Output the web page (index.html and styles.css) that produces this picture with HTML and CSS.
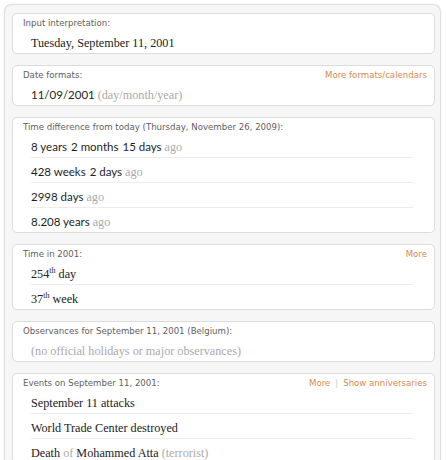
FILE: index.html
```html
<!DOCTYPE html>
<html lang="en">
<head>
    <meta charset="UTF-8">
    <meta name="viewport" content="width=device-width, initial-scale=1.0">
    <title>September 11, 2001</title>
    <link rel="stylesheet" href="styles.css">
</head>
<body>
    <div class="results">
        <section class="pod">
            <div class="pod-head">
                <span class="pod-title">Input interpretation:</span>
            </div>
            <div class="row serif">Tuesday, September 11, 2001</div>
        </section>

        <section class="pod">
            <div class="pod-head">
                <span class="pod-title">Date formats:</span>
                <span class="pod-links"><a href="#">More formats/calendars</a></span>
            </div>
            <div class="row sans">11/09/2001 <span class="dim serif">(day/month/year)</span></div>
        </section>

        <section class="pod">
            <div class="pod-head">
                <span class="pod-title">Time difference from today (Thursday, November 26, 2009):</span>
            </div>
            <div class="row sans"><span class="unit">8 years</span><span class="unit">2 months</span><span class="unit">15 days</span> <span class="dim serif">ago</span></div>
            <div class="row sans"><span class="unit">428 weeks</span><span class="unit">2 days</span> <span class="dim serif">ago</span></div>
            <div class="row sans">2998 days <span class="dim serif">ago</span></div>
            <div class="row sans">8.208 years <span class="dim serif">ago</span></div>
        </section>

        <section class="pod">
            <div class="pod-head">
                <span class="pod-title">Time in 2001:</span>
                <span class="pod-links"><a href="#">More</a></span>
            </div>
            <div class="row serif">254<sup>th</sup> day</div>
            <div class="row serif">37<sup>th</sup> week</div>
        </section>

        <section class="pod">
            <div class="pod-head">
                <span class="pod-title">Observances for September 11, 2001 (Belgium):</span>
            </div>
            <div class="row serif dim">(no official holidays or major observances)</div>
        </section>

        <section class="pod">
            <div class="pod-head">
                <span class="pod-title">Events on September 11, 2001:</span>
                <span class="pod-links"><a href="#">More</a><span class="sep">|</span><a href="#">Show anniversaries</a></span>
            </div>
            <div class="row serif">September 11 attacks</div>
            <div class="row serif">World Trade Center destroyed</div>
            <div class="row serif">Death <span class="dim">of</span> Mohammed Atta <span class="dim">(terrorist)</span></div>
        </section>
    </div>
</body>
</html>
```

FILE: styles.css
```css
body {
    margin: 0;
    background: #fff;
    font-family: "DejaVu Sans", Verdana, sans-serif;
    color: #222;
}
.results {
    margin: 4px 5px 0 4px;
    padding: 8px 5px 0 7px;
    background: #f6f6f6;
    border: 1px solid #dedede;
    border-bottom: none;
    border-radius: 8px 8px 0 0;
    box-shadow: 0 0 2px rgba(0, 0, 0, 0.08);
    display: flex;
    flex-direction: column;
    gap: 11px;
}
.pod {
    background: #fff;
    border: 1px solid #dcdcdc;
    border-radius: 5px;
    padding: 4px 0 0 0;
}
.pod-head {
    display: flex;
    justify-content: space-between;
    padding: 0 7px 0 10px;
    line-height: 11px;
    font-size: 8.6px;
}
.pod-title {
    color: #606060;
}
.pod-links a {
    color: #d98a50;
    text-decoration: none;
}
.sep {
    color: #ccc;
    margin: 0 5px;
}
.row {
    margin: 0 21px 0 18px;
    padding-top: 4px;
    line-height: 20px;
    border-bottom: 1px solid #ececec;
}
.row:last-child {
    border-bottom: none;
}
.serif {
    font-family: "Liberation Serif", "Times New Roman", serif;
    font-size: 12.2px;
}
.sans {
    font-family: Lato, "Open Sans", sans-serif;
    font-size: 11.5px;
    color: #1e1e1e;
}
.unit + .unit {
    margin-left: 4px;
}
.dim {
    color: #aaa;
}
sup {
    font-size: 8px;
    line-height: 0;
    vertical-align: 5px;
}
```
